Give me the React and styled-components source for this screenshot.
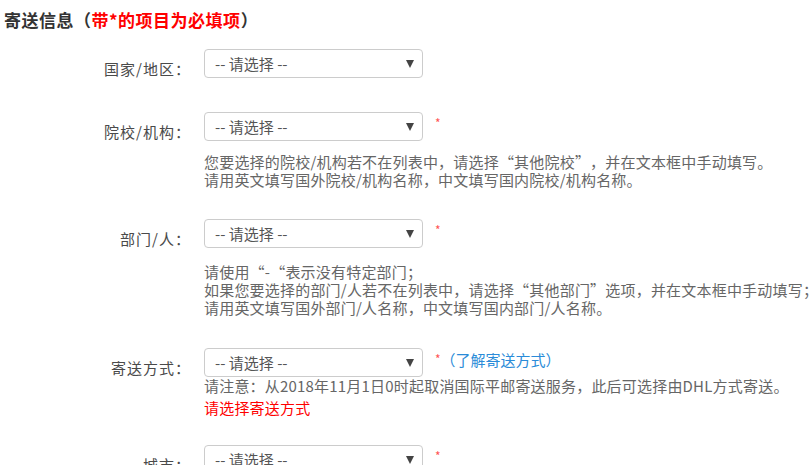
import React from "react";
import styled, { createGlobalStyle } from "styled-components";

const Global = createGlobalStyle`
  html, body { margin: 0; padding: 0; background: #fff; overflow: hidden; }
  body {
    font-family: "Noto Sans CJK SC", "Noto Sans", sans-serif;
    color: #444;
    text-spacing-trim: space-all;
  }
`;

const Page = styled.div`
  width: 810px;
  height: 465px;
  overflow: hidden;
  padding: 8px 0 0 4px;
  box-sizing: border-box;
`;

const Heading = styled.h2`
  margin: 0;
  font-size: 17px;
  font-weight: bold;
  line-height: 24px;
  color: #333;
  letter-spacing: 0.5px;
  white-space: nowrap;
`;

const Required = styled.span`
  color: #f00;
`;

const Row = styled.div`
  display: flex;
  align-items: flex-start;
  margin-top: ${(p) => p.$mt}px;
`;

const Label = styled.div`
  width: 187px;
  flex: none;
  margin-right: 13px;
  text-align: right;
  font-size: 15px;
  line-height: 20px;
  letter-spacing: 1px;
  padding-top: 10px;
  color: #4a4a4a;
  white-space: nowrap;
`;

const Field = styled.div`
  display: flex;
  flex-direction: column;
  align-items: flex-start;
`;

const FieldLine = styled.div`
  display: flex;
  align-items: flex-start;
`;

const Select = styled.div`
  width: 219px;
  height: 29px;
  box-sizing: border-box;
  border: 1px solid #ccc;
  border-radius: 4px;
  background: #fff;
  display: flex;
  align-items: center;
  justify-content: space-between;
  padding: 0 8px 0 10px;
  font-size: 15px;
  color: #555;
`;

const Arrow = styled.span`
  width: 0;
  height: 0;
  border-left: 4px solid transparent;
  border-right: 4px solid transparent;
  border-top: 8px solid #444;
`;

const Star = styled.span`
  color: #f55;
  font-size: 12px;
  line-height: 14px;
  margin: 4px 0 0 12px;
`;

const Link = styled.a`
  color: #2a8bd8;
  font-size: 15px;
  line-height: 20px;
  margin-top: 2px;
  text-decoration: none;
  white-space: nowrap;
`;

const Help = styled.div`
  margin-top: ${(p) => p.$mt}px;
  font-size: 15px;
  line-height: 18px;
  letter-spacing: 0.2px;
  color: ${(p) => (p.$error ? "#f00" : "#666")};
  white-space: nowrap;
`;

const SelectControl = () => (
  <Select>
    <span>-- 请选择 --</span>
    <Arrow />
  </Select>
);

export default function App() {
  return (
    <>
      <Global />
      <Page>
        <Heading>
          寄送信息（<Required>带*的项目为必填项</Required>）
        </Heading>

        <Row $mt={17}>
          <Label>国家/地区：</Label>
          <Field>
            <FieldLine>
              <SelectControl />
            </FieldLine>
          </Field>
        </Row>

        <Row $mt={33}>
          <Label>院校/机构：</Label>
          <Field>
            <FieldLine>
              <SelectControl />
              <Star>*</Star>
            </FieldLine>
            <Help $mt={12}>
              您要选择的院校/机构若不在列表中，请选择“其他院校”，并在文本框中手动填写。
              <br />
              请用英文填写国外院校/机构名称，中文填写国内院校/机构名称。
            </Help>
          </Field>
        </Row>

        <Row $mt={30}>
          <Label>部门/人：</Label>
          <Field>
            <FieldLine>
              <SelectControl />
              <Star>*</Star>
            </FieldLine>
            <Help $mt={15}>
              请使用“-“表示没有特定部门；
              <br />
              如果您要选择的部门/人若不在列表中，请选择“其他部门”选项，并在文本框中手动填写；
              <br />
              请用英文填写国外部门/人名称，中文填写国内部门/人名称。
            </Help>
          </Field>
        </Row>

        <Row $mt={31}>
          <Label>寄送方式：</Label>
          <Field>
            <FieldLine>
              <SelectControl />
              <Star>*</Star>
              <Link href="#">（了解寄送方式）</Link>
            </FieldLine>
            <Help $mt={0}>
              请注意：从2018年11月1日0时起取消国际平邮寄送服务，此后可选择由DHL方式寄送。
            </Help>
            <Help $mt={4} $error>
              请选择寄送方式
            </Help>
          </Field>
        </Row>

        <Row $mt={28}>
          <Label>城市：</Label>
          <Field>
            <FieldLine>
              <SelectControl />
              <Star>*</Star>
            </FieldLine>
          </Field>
        </Row>
      </Page>
    </>
  );
}
